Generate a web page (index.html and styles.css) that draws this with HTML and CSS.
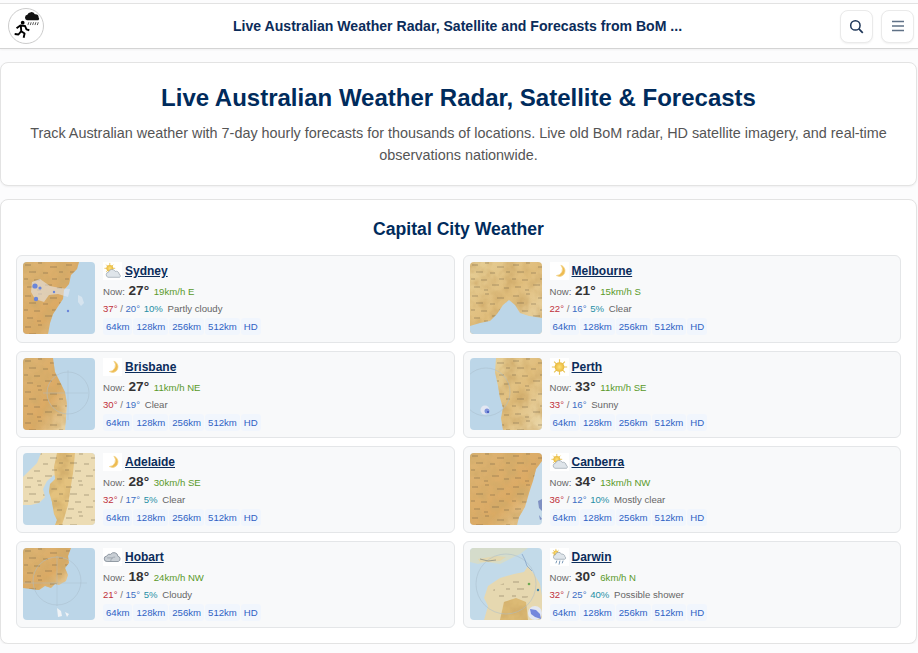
FILE: index.html
```html
<!DOCTYPE html>
<html lang="en">
<head>
<meta charset="utf-8">
<title>Live Australian Weather Radar, Satellite and Forecasts from BoM</title>
<link rel="stylesheet" href="styles.css">
</head>
<body>
<svg class="defs" aria-hidden="true">
  <defs>
    <linearGradient id="land" x1="0" y1="0" x2="1" y2="1">
      <stop offset="0" stop-color="#e6cf97"/><stop offset=".5" stop-color="#e0bd7c"/><stop offset="1" stop-color="#ead8ab"/>
    </linearGradient>
    <linearGradient id="landDeep" x1="0" y1="0" x2="1" y2="1">
      <stop offset="0" stop-color="#dcb474"/><stop offset=".6" stop-color="#dcaa64"/><stop offset="1" stop-color="#ead8ab"/>
    </linearGradient>
    <filter id="terrain" x="0" y="0" width="100%" height="100%">
      <feTurbulence type="fractalNoise" baseFrequency=".085" numOctaves="3" seed="4"/>
      <feColorMatrix values="0 0 0 0 .62  0 0 0 0 .40  0 0 0 0 .14  1.700 0 0 0 -.62" result="noise"/>
      <feComposite in="noise" in2="SourceAlpha" operator="in" result="clipped"/>
      <feMerge><feMergeNode in="SourceGraphic"/><feMergeNode in="clipped"/></feMerge>
    </filter>
    <pattern id="towns" width="41" height="31" patternUnits="userSpaceOnUse">
      <path d="M2 3h6M15 1h4M27 5h7M36 10h4M6 10h7M20 11h5M1 17h4M11 18h6M29 17h5M22 23h7M4 25h6M14 28h4M34 26h5" stroke="#5e5238" stroke-width=".7" opacity=".62"/>
    </pattern>
    <radialGradient id="sunGlow">
      <stop offset="0" stop-color="#ffe27a"/><stop offset="1" stop-color="#e8b83c"/>
    </radialGradient>
    <symbol id="i-moon" viewBox="0 0 20 20"><path d="M10.500 3.500a7 7 0 0 1-5 11.600 6.600 6.600 0 0 0 8-1A6.600 6.600 0 0 0 10.500 3.500z" transform="translate(1 0)" fill="#eebb50" stroke="#f3d48a" stroke-width=".8"/></symbol>
    <symbol id="i-sun" viewBox="0 0 20 20"><g stroke="#e8c55a" stroke-width="1.300"><path d="M10 1.500v17M1.500 10h17M4 4l12 12M16 4L4 16"/></g><circle cx="10" cy="10" r="5.400" fill="url(#sunGlow)"/></symbol>
    <symbol id="i-partly" viewBox="0 0 20 20"><g stroke="#e8c55a" stroke-width="1"><path d="M7 1v12M1 7h12M3 3l8 8M11 3L3 11"/></g><circle cx="7" cy="7" r="3.800" fill="url(#sunGlow)"/><path d="M5 17a3 3 0 0 1 .6-5.800 4 4 0 0 1 7.400-.8 3.400 3.400 0 0 1 4.400 3.200 2 2 0 0 1 .6 3.400z" fill="#dfe5ea" stroke="#9aa6b0" stroke-width=".8"/></symbol>
    <symbol id="i-cloud" viewBox="0 0 20 20"><path d="M4 15a3 3 0 0 1-.4-6 3.600 3.600 0 0 1 4.400-2 4.400 4.400 0 0 1 8 2.200 3 3 0 0 1 .4 5.800z" fill="#c9cfd5" stroke="#7f8a94" stroke-width=".9"/><path d="M8 15c0-3 2-5 5-5M4 11h6" stroke="#8a949d" stroke-width=".7" fill="none"/></symbol>
    <symbol id="i-shower" viewBox="0 0 20 20"><g stroke="#e8c55a" stroke-width=".9"><path d="M6 1v9M1.500 5.500h9M3 2.500l6 6M9 2.500l-6 6"/></g><circle cx="6" cy="5.500" r="2.800" fill="url(#sunGlow)"/><path d="M5 12.500a2.600 2.600 0 0 1 .4-5 3.600 3.600 0 0 1 6.800-.6 3 3 0 0 1 3.800 2.800 1.600 1.600 0 0 1 0 2.800z" fill="#dfe5ea" stroke="#94a0aa" stroke-width=".8"/><path d="M7 14l-1 3M10.500 14l-1 4.500M14 14l-1 3" stroke="#6d8fb0" stroke-width="1"/></symbol>
  </defs>
</svg>

<header class="topbar">
  <a class="logo" href="#" aria-label="Home">
    <svg viewBox="0 0 36 36" width="34" height="34">
      <path d="M19 12a3 3 0 0 1 .4-5.800 4.400 4.400 0 0 1 8-.6 3.600 3.600 0 0 1 4 3.400 2 2 0 0 1-.4 3z" fill="#111"/>
      <path d="M20 17l1-3M22.500 17l1-3M25 17l1-3M27.500 17l1-3M30 17l1-3" stroke="#222" stroke-width=".8"/>
      <circle cx="14.500" cy="14.500" r="2" fill="#000"/>
      <path d="M8 20.500l4-3 5 .5 1.500 3.500 3 1M12.500 18l.5 5.500 3.500 2.500-1 4.500M13 23.500l-3 3.500-4-.5" fill="none" stroke="#000" stroke-width="2" stroke-linejoin="round"/>
    </svg>
  </a>
  <div class="site-title">Live Australian Weather Radar, Satellite and Forecasts from BoM ...</div>
  <div class="actions">
    <button class="icon-btn" aria-label="Search">
      <svg viewBox="0 0 16 16" width="15" height="15"><circle cx="6.800" cy="6.800" r="5" fill="none" stroke="#1d3557" stroke-width="1.600"/><path d="M10.500 10.500l4.200 4.200" stroke="#1d3557" stroke-width="1.800"/></svg>
    </button>
    <button class="icon-btn" aria-label="Menu">
      <svg viewBox="0 0 14 14" width="14" height="14"><path d="M1 2.500h12M1 7h12M1 11.500h12" stroke="#5f7186" stroke-width="1.700"/></svg>
    </button>
  </div>
</header>

<section class="panel hero">
  <h1>Live Australian Weather Radar, Satellite &amp; Forecasts</h1>
  <p>Track Australian weather with 7-day hourly forecasts for thousands of locations. Live old BoM radar, HD satellite imagery, and real-time observations nationwide.</p>
</section>

<section class="panel capitals">
  <h2>Capital City Weather</h2>
  <div class="city-grid">

    <article class="city">
      <svg class="map" viewBox="0 0 72 72">
        <rect width="72" height="72" fill="#bcd6e8"/>
        <path d="M0 0h56l-2 7-6 6-2 9-5 6-1 9-4 6-6 9-3 9-2 11H0z" fill="url(#landDeep)" filter="url(#terrain)"/>
        <path d="M0 0h56l-2 7-6 6-2 9-5 6-1 9-4 6-6 9-3 9-2 11H0z" fill="url(#towns)"/>
        <path d="M9 20l8-3 10 7 10 2 10 1-2 8-10-3-9 1-5 7-9-3-4-7z" fill="#e6e9f2" opacity=".55"/>
        <g fill="#6a86da"><circle cx="12" cy="24" r="2.600"/><circle cx="13" cy="37" r="2.200"/><circle cx="17" cy="26" r="1.600"/><circle cx="31" cy="30" r="1.200"/><circle cx="45" cy="49" r="1.200"/></g>
        <path d="M55 33l4 2 2 6-3 3-3-4z" fill="#d6e4ef"/>
      </svg>
      <div class="info">
        <div class="name-row"><svg class="wx"><use href="#i-partly"/></svg><a class="name" href="#">Sydney</a></div>
        <div class="now"><span class="now-label">Now:</span> <b class="temp">27°</b> <span class="wind">19km/h E</span></div>
        <div class="range"><span class="hi">37°</span> / <span class="lo">20°</span> <span class="rain">10%</span> <span class="desc">Partly cloudy</span></div>
        <div class="chips"><a href="#">64km</a><a href="#">128km</a><a href="#">256km</a><a href="#">512km</a><a href="#">HD</a></div>
      </div>
    </article>

    <article class="city">
      <svg class="map" viewBox="0 0 72 72">
        <rect width="72" height="72" fill="url(#land)" filter="url(#terrain)"/>
        <rect width="72" height="72" fill="url(#towns)"/>
        <path d="M0 64l10-3 10-2 7-7 6-9 6-5 6 5 5 8 9 3 13 2v16H0z" fill="#bcd6e8"/>
      </svg>
      <div class="info">
        <div class="name-row"><svg class="wx"><use href="#i-moon"/></svg><a class="name" href="#">Melbourne</a></div>
        <div class="now"><span class="now-label">Now:</span> <b class="temp">21°</b> <span class="wind">15km/h S</span></div>
        <div class="range"><span class="hi">22°</span> / <span class="lo">16°</span> <span class="rain">5%</span> <span class="desc">Clear</span></div>
        <div class="chips"><a href="#">64km</a><a href="#">128km</a><a href="#">256km</a><a href="#">512km</a><a href="#">HD</a></div>
      </div>
    </article>

    <article class="city">
      <svg class="map" viewBox="0 0 72 72">
        <rect width="72" height="72" fill="#bcd6e8"/>
        <path d="M0 0h30l2 14 4 8 6 12 2 12-1 14-1 12H0z" fill="url(#landDeep)" filter="url(#terrain)"/>
        <path d="M0 0h30l2 14 4 8 6 12 2 12-1 14-1 12H0z" fill="url(#towns)"/>
        <circle cx="45" cy="35" r="21" fill="none" stroke="#a9bccb" stroke-width=".5"/>
        <path d="M20 35h45M45 12v50" stroke="#a9bccb" stroke-width=".4"/>
      </svg>
      <div class="info">
        <div class="name-row"><svg class="wx"><use href="#i-moon"/></svg><a class="name" href="#">Brisbane</a></div>
        <div class="now"><span class="now-label">Now:</span> <b class="temp">27°</b> <span class="wind">11km/h NE</span></div>
        <div class="range"><span class="hi">30°</span> / <span class="lo">19°</span> <span class="desc">Clear</span></div>
        <div class="chips"><a href="#">64km</a><a href="#">128km</a><a href="#">256km</a><a href="#">512km</a><a href="#">HD</a></div>
      </div>
    </article>

    <article class="city">
      <svg class="map" viewBox="0 0 72 72">
        <rect width="72" height="72" fill="#bcd6e8"/>
        <path d="M26 0h46v72H33l-2-12 2-10-3-10-2-12-3-14z" fill="url(#land)" filter="url(#terrain)"/>
        <path d="M26 0h46v72H33l-2-12 2-10-3-10-2-12-3-14z" fill="url(#towns)"/>
        <circle cx="16" cy="34" r="24" fill="none" stroke="#a9bccb" stroke-width=".5"/>
        <circle cx="15" cy="52" r="4.500" fill="#e3e7f2"/><circle cx="17" cy="53" r="2.500" fill="#7e93dc"/><circle cx="18" cy="54" r="1" fill="#3a4fb8"/>
      </svg>
      <div class="info">
        <div class="name-row"><svg class="wx"><use href="#i-sun"/></svg><a class="name" href="#">Perth</a></div>
        <div class="now"><span class="now-label">Now:</span> <b class="temp">33°</b> <span class="wind">11km/h SE</span></div>
        <div class="range"><span class="hi">33°</span> / <span class="lo">16°</span> <span class="desc">Sunny</span></div>
        <div class="chips"><a href="#">64km</a><a href="#">128km</a><a href="#">256km</a><a href="#">512km</a><a href="#">HD</a></div>
      </div>
    </article>

    <article class="city">
      <svg class="map" viewBox="0 0 72 72">
        <rect width="72" height="72" fill="#bfd8e8"/>
        <path d="M18 0h54v72H34l2-5-3-6-2-12-3-10 1-8 5-5-3-4-7 6-4 8 2 8-6 6-8 2-8 0V24l8-8 6-6z" fill="#ecdcb4"/>
        <path d="M34 0h18l-2 20-3 18-2 14-6 20h-7l2-5-3-6-2-12-3-10 1-8 5-5-1-12z" fill="#e4c27e" filter="url(#terrain)"/>
        <path d="M18 0h54v72H34l2-5-3-6-2-12-3-10 1-8 5-5-3-4-7 6-4 8 2 8-6 6-8 2-8 0V24l8-8 6-6z" fill="url(#towns)"/>
      </svg>
      <div class="info">
        <div class="name-row"><svg class="wx"><use href="#i-moon"/></svg><a class="name" href="#">Adelaide</a></div>
        <div class="now"><span class="now-label">Now:</span> <b class="temp">28°</b> <span class="wind">30km/h SE</span></div>
        <div class="range"><span class="hi">32°</span> / <span class="lo">17°</span> <span class="rain">5%</span> <span class="desc">Clear</span></div>
        <div class="chips"><a href="#">64km</a><a href="#">128km</a><a href="#">256km</a><a href="#">512km</a><a href="#">HD</a></div>
      </div>
    </article>

    <article class="city">
      <svg class="map" viewBox="0 0 72 72">
        <rect width="72" height="72" fill="#c6dbe9"/>
        <path d="M0 0h72v8l-6 8-3 12-4 12-4 14-6 10-2 8H0z" fill="url(#landDeep)" filter="url(#terrain)"/>
        <path d="M0 0h72v8l-6 8-3 12-4 12-4 14-6 10-2 8H0z" fill="url(#towns)"/>
        <path d="M68 48l4-2v12l-3-3zM69 62l3 4-2 1z" fill="#7f90c2"/>
      </svg>
      <div class="info">
        <div class="name-row"><svg class="wx"><use href="#i-partly"/></svg><a class="name" href="#">Canberra</a></div>
        <div class="now"><span class="now-label">Now:</span> <b class="temp">34°</b> <span class="wind">13km/h NW</span></div>
        <div class="range"><span class="hi">36°</span> / <span class="lo">12°</span> <span class="rain">10%</span> <span class="desc">Mostly clear</span></div>
        <div class="chips"><a href="#">64km</a><a href="#">128km</a><a href="#">256km</a><a href="#">512km</a><a href="#">HD</a></div>
      </div>
    </article>

    <article class="city">
      <svg class="map" viewBox="0 0 72 72">
        <rect width="72" height="72" fill="#bcd6e8"/>
        <path d="M0 0h48l-3 8 1 7-4 5 3 7-2 6-7 4-4-1-4 4-6-2-6 4-16-2z" fill="url(#landDeep)" filter="url(#terrain)"/>
        <path d="M0 0h48l-3 8 1 7-4 5 3 7-2 6-7 4-4-1-4 4-6-2-6 4-16-2z" fill="url(#towns)"/>
        <circle cx="34" cy="33" r="24" fill="none" stroke="#a9bccb" stroke-width=".5"/>
        <path d="M0 35h64M34 8v50" stroke="#a9bccb" stroke-width=".4"/>
        <path d="M34 60l4 3 1 5-4 1zM42 64l4 2-2 3z" fill="#f0f3f6"/>
      </svg>
      <div class="info">
        <div class="name-row"><svg class="wx"><use href="#i-cloud"/></svg><a class="name" href="#">Hobart</a></div>
        <div class="now"><span class="now-label">Now:</span> <b class="temp">18°</b> <span class="wind">24km/h NW</span></div>
        <div class="range"><span class="hi">21°</span> / <span class="lo">15°</span> <span class="rain">5%</span> <span class="desc">Cloudy</span></div>
        <div class="chips"><a href="#">64km</a><a href="#">128km</a><a href="#">256km</a><a href="#">512km</a><a href="#">HD</a></div>
      </div>
    </article>

    <article class="city">
      <svg class="map" viewBox="0 0 72 72">
        <rect width="72" height="72" fill="#c2dae9"/>
        <path d="M0 0h58l-8 6-12 6-8 4-14-2-8 2-8-2z" fill="#d5dccb"/>
        <path d="M8 11l18-3 10 1-6 4-10 1-10 0z" fill="#e3d8b0"/>
        <path d="M14 72l4-14-4-8 4-12 12-8 14-4 10-2 4-6 6 8 6 10 2 12v24z" fill="#e6d8b0"/>
        <path d="M24 40l16-8 14-2 6 8 2 10-6 2-14 2-14-2-6-4z" fill="url(#towns)"/>
        <path d="M30 72l4-18 12-4 10 4 2 18z" fill="#dcba74" filter="url(#terrain)"/>
        <circle cx="36" cy="36" r="30" fill="none" stroke="#a9bccb" stroke-width=".5"/>
        <path d="M52 6l3 6 2 6 5 5" stroke="#7c9cc4" stroke-width=".7" fill="none"/>
        <path d="M10 11l8 2 8-1" stroke="#6c7474" stroke-width=".6" fill="none"/>
        <circle cx="65" cy="65" r="7" fill="#e3e7f2"/>
        <path d="M60 61l6 1 4 4 1 5-6-2-4-3z" fill="#7487dc"/>
        <circle cx="59" cy="36" r="1.300" fill="#6da852"/><circle cx="68" cy="42" r="1.200" fill="#3d82a8"/>
      </svg>
      <div class="info">
        <div class="name-row"><svg class="wx"><use href="#i-shower"/></svg><a class="name" href="#">Darwin</a></div>
        <div class="now"><span class="now-label">Now:</span> <b class="temp">30°</b> <span class="wind">6km/h N</span></div>
        <div class="range"><span class="hi">32°</span> / <span class="lo">25°</span> <span class="rain">40%</span> <span class="desc">Possible shower</span></div>
        <div class="chips"><a href="#">64km</a><a href="#">128km</a><a href="#">256km</a><a href="#">512km</a><a href="#">HD</a></div>
      </div>
    </article>

  </div>
</section>
</body>
</html>
```
FILE: styles.css
```css
* { box-sizing: border-box; }

html, body {
  margin: 0;
  background: #fcfcfd;
  overflow: hidden;
  font-family: "Liberation Sans", Arial, sans-serif;
}

.defs {
  position: absolute;
  width: 0;
  height: 0;
}

.topbar {
  display: grid;
  grid-template-columns: 225px 1fr auto;
  align-items: center;
  height: 46px;
  margin-top: 3px;
  padding: 0 4px 0 8px;
  background: #fff;
  border-top: 1px solid #e2e2e2;
  border-bottom: 1px solid #d4d4d4;
  box-shadow: 0 1px 2px rgba(0, 0, 0, .05);
}

.logo {
  display: flex;
  align-items: center;
  justify-content: center;
  width: 36px;
  height: 36px;
  background: #fff;
  border: 1px solid #ccc;
  border-radius: 50%;
}

.site-title {
  color: #0b2c5a;
  font-size: 14.08px;
  font-weight: 700;
  white-space: nowrap;
}

.actions {
  display: flex;
  justify-content: flex-end;
  gap: 8px;
}

.icon-btn {
  display: flex;
  align-items: center;
  justify-content: center;
  width: 33px;
  height: 33px;
  padding: 0;
  background: #fff;
  border: 1px solid #eaeaea;
  border-radius: 8px;
  box-shadow: 0 1px 2px rgba(0, 0, 0, .06);
}

.panel {
  background: #fff;
  border: 1px solid #e3e3e3;
  border-radius: 8px;
  box-shadow: 0 1px 2px rgba(0, 0, 0, .05);
  margin-right: 1px;
}

.hero {
  margin-top: 13px;
  padding: 21px 20px 18px;
  text-align: center;
}

.hero h1 {
  margin: 0 0 9px;
  color: #002b5c;
  font-size: 24px;
  line-height: 1.2;
}

.hero p {
  margin: 0;
  color: #555;
  font-size: 14.4px;
  line-height: 22.4px;
}

.capitals {
  margin-top: 13px;
  padding: 19px 15px 15px;
}

.capitals h2 {
  margin: 0 0 15px;
  color: #002b5c;
  font-size: 17.6px;
  line-height: 21.6px;
  text-align: center;
}

.city-grid {
  display: grid;
  grid-template-columns: 1fr 1fr;
  gap: 8px;
}

.city {
  display: flex;
  gap: 8px;
  padding: 6px;
  background: #f8f9fa;
  border: 1px solid #e4e6e8;
  border-radius: 6px;
}

.map {
  flex: none;
  width: 72px;
  height: 72px;
  border-radius: 4px;
  filter: blur(.3px);
}

.info {
  display: flex;
  flex-direction: column;
  height: 73.3px;
  min-width: 0;
}

.name-row {
  display: flex;
  align-items: center;
  gap: 3px;
  height: 18px;
}

.wx {
  flex: none;
  width: 19px;
  height: 18px;
  background: #fff;
}

.name {
  color: #0b2c5a;
  font-size: 12px;
  font-weight: 700;
  text-decoration: underline;
}

.now {
  height: 19px;
  margin-top: 1px;
  color: #666;
  font-size: 9.6px;
  line-height: 19px;
  white-space: nowrap;
}

.temp {
  margin: 0 1px;
  color: #333;
  font-size: 13.6px;
}

.wind {
  margin-left: 1px;
  color: #5a9a2a;
}

.range {
  height: 18px;
  color: #777;
  font-size: 9.6px;
  line-height: 18px;
  white-space: nowrap;
}

.hi { color: #c0303a; }
.lo { color: #3d6fc4; }
.rain { margin-left: 1px; color: #1f8fa5; }
.desc { margin-left: 2px; color: #666; }

.chips {
  display: flex;
  gap: 1px;
}

.chips a {
  padding: 2px 3px;
  color: #2f62c4;
  background: #f1f6fd;
  border-radius: 3px;
  font-size: 9.6px;
  line-height: 13px;
  text-decoration: none;
}
```
